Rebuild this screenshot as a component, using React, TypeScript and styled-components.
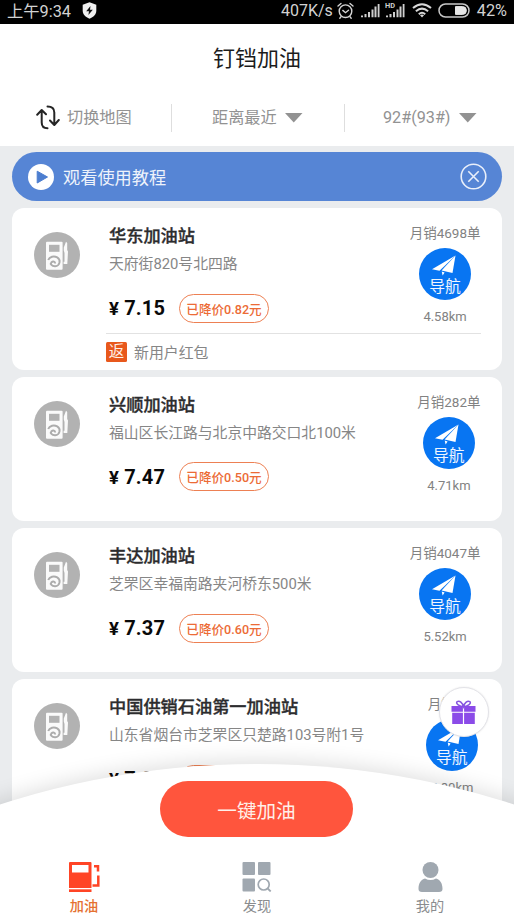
import React from "react";
import styled, { createGlobalStyle, css } from "styled-components";

const GlobalStyle = createGlobalStyle`
  *, *::before, *::after { box-sizing: border-box; }
  html, body { margin: 0; padding: 0; overflow: hidden; }
  body { font-family: Roboto, "Noto Sans CJK SC", sans-serif; }
`;

const Screen = styled.div`
  position: relative;
  width: 514px;
  height: 915px;
  overflow: hidden;
  background: #eaecee;
  display: flex;
  flex-direction: column;
`;

const StatusBar = styled.header`
  flex: none;
  height: 24px;
  padding: 0 7px 3px;
  display: flex;
  align-items: center;
  background: #000;
  color: #d2d2d2;
  font-size: 16.3px;
  line-height: 21px;
  white-space: nowrap;
`;

const Clock = styled.span`
  width: 75px;
  padding-top: 1px;
`;

const StatusIcons = styled.div`
  margin-left: auto;
  display: flex;
  align-items: center;
  svg { display: block; }
`;

const Speed = styled.span`
  width: 56px;
  font-size: 16px;
`;

const Battery = styled.span`
  width: 33px;
  text-align: right;
  font-size: 16.3px;
`;

const Spacer = styled.span<{ $w: number }>`
  flex: none;
  width: ${(p) => p.$w}px;
`;

const TitleBar = styled.div`
  flex: none;
  height: 67px;
  padding-bottom: 4px;
  display: flex;
  align-items: center;
  justify-content: center;
  background: #fff;
  color: #1c1c1c;
  font-size: 22px;
`;

const FilterBar = styled.nav`
  flex: none;
  height: 55px;
  padding-bottom: 2px;
  display: grid;
  grid-template-columns: 171px 173px 170px;
  align-items: center;
  background: #fff;
`;

const Filter = styled.div<{ $gap: number; $divided?: boolean; $inset: number }>`
  height: 28px;
  padding-left: ${(p) => p.$inset}px;
  display: flex;
  align-items: center;
  gap: ${(p) => p.$gap}px;
  color: #929292;
  font-size: 16.2px;
  line-height: 28px;
  white-space: nowrap;
  ${(p) => p.$divided && css`border-left: 1px solid #dedede;`}
  svg { flex: none; display: block; }
`;

const Banner = styled.div`
  flex: none;
  height: 49px;
  margin: 6px 12.5px 7px 12px;
  padding: 0 15px 0 16px;
  display: flex;
  align-items: center;
  border-radius: 25px;
  background: #5685d5;
  color: #eef3fb;
  font-size: 17.2px;
  svg { flex: none; display: block; }
`;

const BannerText = styled.span`
  flex: 1;
  margin-left: 9px;
  padding-top: 2px;
  line-height: 26px;
`;

const StationList = styled.main`
  display: flex;
  flex-direction: column;
  gap: 7.3px;
  padding: 0 12.5px 0 12px;
`;

const Card = styled.article<{ $tall?: boolean }>`
  flex: none;
  height: ${(p) => (p.$tall ? 161.5 : 144)}px;
  padding: 14px 21px 0 22px;
  display: grid;
  grid-template-columns: 75px 1fr auto;
  grid-template-rows: 111px auto;
  border-radius: 12px;
  background: #fff;
`;

const StationIcon = styled.div`
  padding-top: 10px;
  svg { display: block; }
`;

const Info = styled.div`
  min-width: 0;
  white-space: nowrap;
`;

const Name = styled.h2`
  margin: 0;
  color: #2c2c2e;
  font-size: 17.2px;
  font-weight: 500;
  line-height: 28px;
  -webkit-text-stroke: 0.35px #2c2c2e;
`;

const Address = styled.p`
  margin: 0;
  color: #868686;
  font-size: 14.8px;
  line-height: 28px;
`;

const PriceRow = styled.div`
  margin-top: 15px;
  height: 30px;
  display: flex;
  align-items: center;
`;

const Price = styled.strong`
  width: 70px;
  display: flex;
  align-items: baseline;
  gap: 5px;
  color: #0a0a0a;
  font-size: 20px;
  font-weight: 700;
  letter-spacing: 0.2px;
`;

const Currency = styled.span`
  font-size: 18.5px;
`;

const Discount = styled.span`
  width: 90px;
  height: 29px;
  display: flex;
  align-items: center;
  justify-content: center;
  border: 1.5px solid #ed8053;
  border-radius: 15px;
  color: #ec6b36;
  font-size: 12.6px;
  font-weight: 500;
`;

const Side = styled.div`
  min-width: 57.5px;
  display: flex;
  flex-direction: column;
  align-items: center;
  color: #828282;
  white-space: nowrap;
`;

const Sales = styled.span`
  height: 22px;
  font-size: 13.5px;
  line-height: 22px;
`;

const NavButton = styled.div`
  width: 52px;
  height: 52px;
  margin-top: 4px;
  padding-top: 7px;
  display: flex;
  flex-direction: column;
  align-items: center;
  border-radius: 50%;
  background: #0875f2;
  color: #f0f6ff;
  font-size: 15.8px;
  line-height: 22px;
  svg { display: block; flex: none; margin-right: 3px; }
`;

const Distance = styled.span`
  margin-top: 7px;
  font-size: 13px;
  line-height: 20px;
`;

const Promo = styled.div`
  grid-column: 2 / 4;
  height: 37px;
  margin-left: -3px;
  display: flex;
  align-items: center;
  gap: 7px;
  border-top: 1px solid #e2e2e2;
  color: #868686;
  font-size: 14.9px;
`;

const PromoTag = styled.span`
  width: 21px;
  height: 20px;
  margin-top: -1px;
  border-radius: 1.5px;
  background: #e8581c;
  color: #fff0e8;
  font-size: 15.5px;
  line-height: 21px;
  text-align: center;
`;

const PromoText = styled.span`
  margin-top: -2px;
`;

const GiftButton = styled.div`
  position: absolute;
  left: 438.5px;
  top: 687px;
  width: 50px;
  height: 50px;
  display: flex;
  align-items: center;
  justify-content: center;
  border: 1px solid #e3e3e8;
  border-radius: 50%;
  background: #fff;
  box-shadow: 0 0 2px rgba(0, 0, 0, 0.1);
`;

const Dock = styled.footer`
  position: absolute;
  left: 0;
  right: 0;
  bottom: 0;
  height: 215px;
  padding-top: 81px;
  overflow: hidden;
  display: flex;
  flex-direction: column;
  align-items: center;
  &::before {
    content: "";
    position: absolute;
    left: 50%;
    top: 63.5px;
    width: 1672px;
    height: 1672px;
    margin-left: -836px;
    border-radius: 50%;
    background: #fff;
    box-shadow: 0 -2px 22px rgba(0, 0, 0, 0.14);
  }
`;

const RefuelButton = styled.button`
  position: relative;
  flex: none;
  width: 193px;
  height: 56px;
  margin-right: 1px;
  padding: 0;
  border: 0;
  border-radius: 28px;
  background: #ff553d;
  color: #fff0ea;
  font-family: inherit;
  font-size: 19.6px;
`;

const Tabs = styled.div`
  position: relative;
  display: flex;
  margin-top: 25px;
`;

const Tab = styled.div<{ $active?: boolean }>`
  width: 173px;
  display: flex;
  flex-direction: column;
  align-items: center;
  color: ${(p) => (p.$active ? "#e57131" : "#8a8c8e")};
  font-size: 14.2px;
  font-weight: ${(p) => (p.$active ? 500 : 400)};
  line-height: 22px;
  svg { display: block; margin-bottom: 2.5px; }
`;

const ShieldIcon = () => (
  <svg width="15" height="17" viewBox="0 0 15 17">
    <path d="M7.5 0.3 14.3 2.8V8.5C14.3 12.5 11.4 15.2 7.5 16.7 3.6 15.2.7 12.5.7 8.5V2.8Z" fill="#f0f0f0" />
    <path d="M8.5 4 4.2 9.2H7L6.4 13 10.8 7.7H8Z" fill="#111" />
  </svg>
);

const AlarmIcon = () => (
  <svg width="17" height="18" viewBox="0 0 17 18" fill="none" stroke="#d4d4d4" strokeWidth="1.4" strokeLinecap="round">
    <circle cx="8.5" cy="9.2" r="6.3" />
    <path d="M1 4 4 1.5M16 4 13 1.5M5.8 8.4 8.5 10.7 11.5 8.3M4 14.8l-1.2 1.4M13 14.8l1.2 1.4" />
  </svg>
);

const SignalIcon = ({ hd }: { hd?: boolean }) => (
  <svg width="20" height="18" viewBox="0 0 20 18" fill="#cfcfcf">
    <path d="M1 13.5h2v1.8H1zM4.5 12h2v3.3h-2zM8 10h2v5.3H8zM11.5 7.5h2v7.8h-2zM14.5 4.5h2v10.8h-2zM17.7 2h1.8v13.3h-1.8z" />
    {hd && <rect width="10.8" height="8" fill="#000" />}
    {hd && (
      <text x="0" y="6.3" fontSize="7.4" fontWeight="700" fontFamily="Roboto, sans-serif">
        HD
      </text>
    )}
  </svg>
);

const WifiIcon = () => (
  <svg width="20" height="15" viewBox="0 0 20 15" fill="none" stroke="#d8d8d8" strokeWidth="2">
    <path d="M1 5Q10-2.6 19 5M3.9 8.2Q10 3 16.1 8.2M6.8 11.2Q10 8.4 13.2 11.2" />
    <path d="M8 12.2Q10 10.8 12 12.2L10 14.6Z" fill="#d8d8d8" stroke="none" />
  </svg>
);

const BatteryIcon = () => (
  <svg width="32" height="15" viewBox="0 0 32 15">
    <rect x="1" y="1" width="30" height="13" rx="6.5" fill="none" stroke="#c8c8c8" strokeWidth="1.5" />
    <path d="M17.5 3.6H24.5A3.9 3.9 0 0 1 24.5 11.4H17.5Z" fill="#e6e6e6" stroke="#e6e6e6" />
  </svg>
);

const SwitchIcon = () => (
  <svg width="24" height="25" viewBox="0 0 24 25" fill="none" stroke="#252525" strokeWidth="2" strokeLinecap="round" strokeLinejoin="round">
    <path d="M1.2 9.8 5.7 5 10 9.3M5.7 5.5V17.5Q5.7 23.2 11.5 23.2M22.8 15 18.3 20 14 15.5M18.3 19.5V7.5Q18.3 1.5 11.5 1.5" />
  </svg>
);

const Caret = () => (
  <svg width="18" height="10" viewBox="0 0 18 10">
    <path d="M0 0H17.5L8.75 9.5Z" fill="#929292" />
  </svg>
);

const PlayIcon = () => (
  <svg width="26" height="26" viewBox="0 0 26 26">
    <circle cx="13" cy="13" r="13" fill="#fff" />
    <path d="M9.2 7.2V19L19.5 13Z" fill="#4c7ed0" stroke="#4c7ed0" strokeLinejoin="round" />
  </svg>
);

const CloseIcon = () => (
  <svg width="27" height="27" viewBox="0 0 27 27" fill="none" stroke="#e9effa" strokeWidth="1.6">
    <circle cx="13.5" cy="13.5" r="12.3" />
    <path d="m8.3 8.3 10.4 10.4M18.7 8.3 8.3 18.7" />
  </svg>
);

const PumpBadge = () => (
  <svg width="46" height="46" viewBox="0 0 46 46">
    <circle cx="23" cy="23" r="23" fill="#b2b2b2" />
    <rect x="12" y="9.8" width="16.6" height="28" rx="1" fill="#fafafa" />
    <rect x="15" y="12.8" width="10.5" height="7" fill="#b2b2b2" />
    <path d="M14.2 28C15.5 24.6 20 23.6 23.2 25.4C27.2 28 26 33.8 21.2 34.2C17.8 34.3 15.8 32 17.5 30.2C19 28.8 21.2 29.4 21.2 31.6" fill="none" stroke="#acacac" strokeWidth="1.9" />
    <path d="M32 9.8 33.2 11V18L34 19.5 33.3 32H29.6V29.8H30.5V21L29.8 18.5V15.5Z" fill="#fafafa" />
  </svg>
);

const PlaneIcon = () => (
  <svg width="24" height="21" viewBox="0 0 24 21" fill="#fff">
    <path d="M23.5 0.5 0 14.2 7.5 15.8Z" />
    <path d="M23.5 0.5 9.6 15.5 20.5 18Z" />
    <path d="M9.7 16.6 12.6 17.4 10.6 20.4Z" />
  </svg>
);

const GiftIcon = () => (
  <svg width="25" height="25" viewBox="0 0 25 25">
    <path d="M12.5 6.5C9 6.5 4 3.5 6.2 1.7 8.5 0 11.5 3 12.5 6.5 13.5 3 16.5 0 18.8 1.7 21 3.5 16 6.5 12.5 6.5Z" fill="none" stroke="#8656df" strokeWidth="1.5" />
    <path d="M.5 6H11.9V11.8H.5ZM13.1 6H24.5V11.8H13.1ZM1.2 12.8H11.9V24H1.2ZM13.1 12.8H23.8V24H13.1Z" fill="#8b4be8" />
  </svg>
);

const FuelTabIcon = () => (
  <svg width="31" height="30" viewBox="0 0 31 30">
    <path d="M1 0H21.5Q22.5 0 22.5 1V26H0V1Q0 0 1 0ZM3 3V10.5H19.5V3Z" fill="#ff4425" fillRule="evenodd" />
    <path d="M0 27.3H22.5V30H0Z" fill="#ff4425" />
    <path d="M25 4.3H29V9.5M29.3 13.5V23.5H23.5" fill="none" stroke="#ff4425" strokeWidth="2.5" />
  </svg>
);

const DiscoverIcon = () => (
  <svg width="30" height="30" viewBox="0 0 30 30" fill="#a0a8b0">
    <rect x="0.5" width="12.5" height="13" rx="1" />
    <rect x="16" width="12.5" height="13" rx="1" />
    <rect x="0.5" y="16.5" width="12.5" height="13" rx="1" />
    <circle cx="21.7" cy="22.5" r="5.5" fill="none" stroke="#a0a8b0" strokeWidth="1.7" />
    <path d="m25.7 26.5 3 3" fill="none" stroke="#a0a8b0" strokeWidth="1.8" />
  </svg>
);

const ProfileIcon = () => (
  <svg width="25" height="30" viewBox="0 0 25 30" fill="#a0a8b0">
    <circle cx="12.5" cy="8" r="8" />
    <path d="M.5 27C.5 21 3 17.5 7 16.5Q12.5 19.7 18 16.5C22 17.5 24.5 21 24.5 27Q24.5 30 21 30H4Q.5 30 .5 27Z" />
  </svg>
);

interface Station {
  name: string;
  address: string;
  price: string;
  discount: string;
  sales: string;
  distance: string;
  promo?: string;
}

const stations: Station[] = [
  { name: "华东加油站", address: "天府街820号北四路", price: "7.15", discount: "0.82", sales: "4698", distance: "4.58", promo: "新用户红包" },
  { name: "兴顺加油站", address: "福山区长江路与北京中路交口北100米", price: "7.47", discount: "0.50", sales: "282", distance: "4.71" },
  { name: "丰达加油站", address: "芝罘区幸福南路夹河桥东500米", price: "7.37", discount: "0.60", sales: "4047", distance: "5.52" },
  { name: "中国供销石油第一加油站", address: "山东省烟台市芝罘区只楚路103号附1号", price: "7.37", discount: "0.60", sales: "8", distance: "5.80" },
];

const StationCard = ({ station }: { station: Station }) => (
  <Card $tall={Boolean(station.promo)}>
    <StationIcon>
      <PumpBadge />
    </StationIcon>
    <Info>
      <Name>{station.name}</Name>
      <Address>{station.address}</Address>
      <PriceRow>
        <Price>
          <Currency>¥</Currency>
          <span>{station.price}</span>
        </Price>
        <Discount>已降价{station.discount}元</Discount>
      </PriceRow>
    </Info>
    <Side>
      <Sales>月销{station.sales}单</Sales>
      <NavButton>
        <PlaneIcon />
        导航
      </NavButton>
      <Distance>{station.distance}km</Distance>
    </Side>
    {station.promo && (
      <Promo>
        <PromoTag>返</PromoTag>
        <PromoText>{station.promo}</PromoText>
      </Promo>
    )}
  </Card>
);

export default function App() {
  return (
    <>
      <GlobalStyle />
      <Screen>
        <StatusBar>
          <Clock>上午9:34</Clock>
          <ShieldIcon />
          <StatusIcons>
            <Speed>407K/s</Speed>
            <AlarmIcon />
            <Spacer $w={6} />
            <SignalIcon />
            <Spacer $w={5} />
            <SignalIcon hd />
            <Spacer $w={7} />
            <WifiIcon />
            <Spacer $w={6} />
            <BatteryIcon />
            <Spacer $w={4} />
            <Battery>42%</Battery>
          </StatusIcons>
        </StatusBar>
        <TitleBar>钉铛加油</TitleBar>
        <FilterBar>
          <Filter $inset={36} $gap={7}>
            <SwitchIcon />
            切换地图
          </Filter>
          <Filter $inset={40} $gap={8} $divided>
            距离最近
            <Caret />
          </Filter>
          <Filter $inset={38} $gap={8} $divided>
            92#(93#)
            <Caret />
          </Filter>
        </FilterBar>
        <Banner>
          <PlayIcon />
          <BannerText>观看使用教程</BannerText>
          <CloseIcon />
        </Banner>
        <StationList>
          {stations.map((s) => (
            <StationCard key={s.name} station={s} />
          ))}
        </StationList>
        <Dock>
          <RefuelButton>一键加油</RefuelButton>
          <Tabs>
            <Tab $active>
              <FuelTabIcon />
              加油
            </Tab>
            <Tab>
              <DiscoverIcon />
              发现
            </Tab>
            <Tab>
              <ProfileIcon />
              我的
            </Tab>
          </Tabs>
        </Dock>
        <GiftButton>
          <GiftIcon />
        </GiftButton>
      </Screen>
    </>
  );
}
